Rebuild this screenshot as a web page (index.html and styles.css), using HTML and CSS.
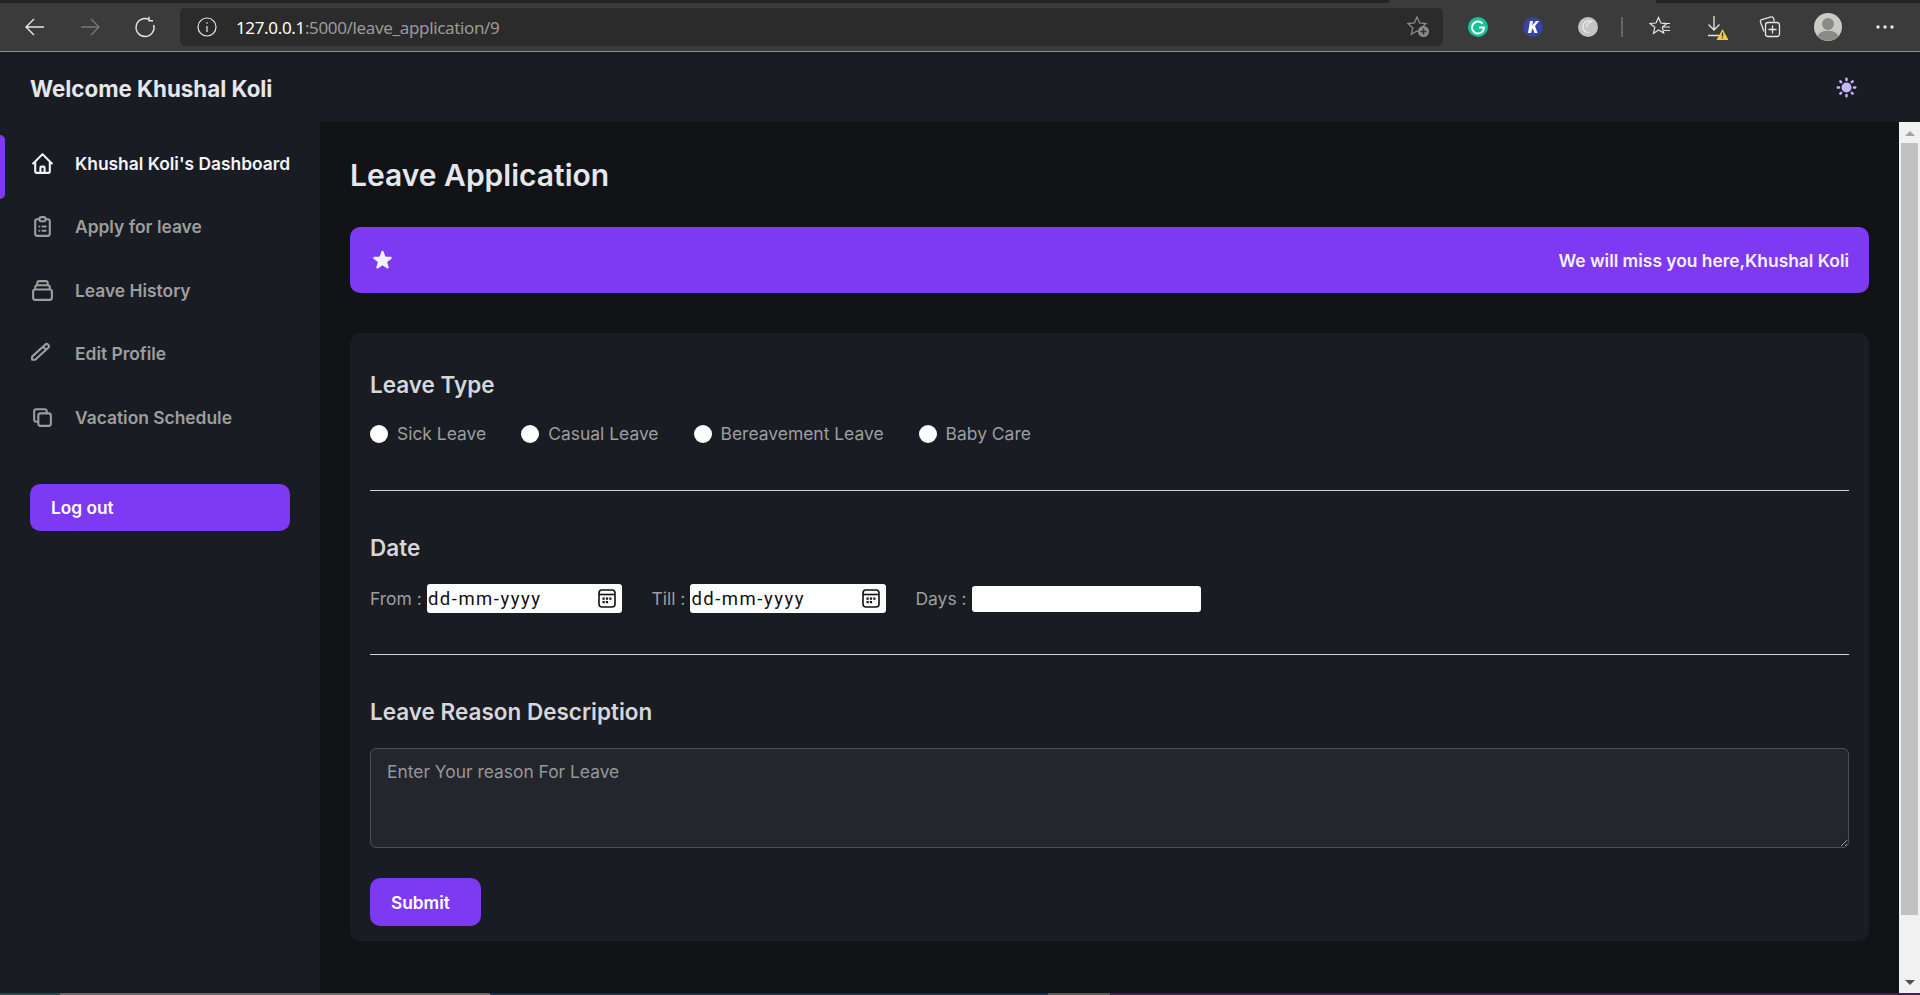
FILE: index.html
```html
<!DOCTYPE html>
<html lang="en">

<head>
  <meta charset="UTF-8">
  <meta name="viewport" content="width=device-width, initial-scale=1.0">
  <title>Leave Application</title>
  <link rel="stylesheet" href="styles.css">
</head>

<body>
  <!-- browser frame -->
  <div class="tab-strip">
    <div class="tab-dark tab-left"></div>
    <div class="tab-active"></div>
    <div class="tab-dark tab-right"></div>
  </div>
  <div class="toolbar">
    <span class="tool">
      <svg width="22" height="22" viewBox="0 0 22 22" fill="none" stroke="#e6e6e6" stroke-width="1.4"><path d="M20 11H2M10 3l-8 8 8 8"/></svg>
    </span>
    <span class="tool">
      <svg width="22" height="22" viewBox="0 0 22 22" fill="none" stroke="#777" stroke-width="1.4"><path d="M2 11h18M12 3l8 8-8 8"/></svg>
    </span>
    <span class="tool">
      <svg width="22" height="22" viewBox="0 0 22 22" fill="none" stroke="#e6e6e6" stroke-width="1.4"><path d="M14.5 3.2A9 9 0 1 0 19.7 9M15 .8v4h4"/></svg>
    </span>
    <div class="address">
      <svg width="20" height="20" viewBox="0 0 20 20" fill="none" stroke="#e6e6e6" stroke-width="1.2"><circle cx="10" cy="10" r="9"/><path d="M10 9v6M10 5.2v1.6"/></svg>
      <span class="url"><span class="url-host">127.0.0.1</span>:5000/leave_application/9</span>
      <svg width="24" height="24" viewBox="0 0 24 24"><path d="M10 2l2.6 6 6.4.6-4.8 4.3 1.4 6.3L10 16l-5.6 3.200 1.400-6.300L1 8.600 7.400 8z" fill="none" stroke="#8a8a8a" stroke-width="1.300"/><circle cx="16.500" cy="16.500" r="5.500" fill="#8a8a8a"/><path d="M16.500 13.500v6M13.500 16.500h6" stroke="#333" stroke-width="1.500"/></svg>
    </div>
    <span class="tool">
      <svg width="22" height="22" viewBox="0 0 22 22"><circle cx="11" cy="11" r="10" fill="#15c39a"/><path d="M15.500 7.500A6 6 0 1 0 17 11.500h-5" fill="none" stroke="#fff" stroke-width="2"/></svg>
    </span>
    <span class="tool">
      <svg width="22" height="22" viewBox="0 0 22 22"><circle cx="11" cy="11" r="10" fill="#3644a8"/><path d="M8 5h3L10.200 9.500 14 5h3.200l-4.200 5 2.500 7h-3.200l-1.500-4.500-1 1.200L9.200 17H6z" fill="#fff"/></svg>
    </span>
    <span class="tool">
      <svg width="22" height="22" viewBox="0 0 22 22"><circle cx="11" cy="11" r="10" fill="#c4c4c4"/><path d="M15.500 6A6 6 0 0 0 6 11c0 4 3 6 6 5M15.500 6c-3-1-6 2-5.500 5" fill="none" stroke="#f0f0f0" stroke-width="1.100"/></svg>
    </span>
    <span class="tool-sep"></span>
    <span class="tool">
      <svg width="22" height="22" viewBox="0 0 22 22" fill="none" stroke="#e6e6e6" stroke-width="1.200"><path d="M9.500 1.500l2.300 5.500 6 .5-4.500 3.800 1.400 5.700-5.200-3-5 3.500 1.300-6.200L1 7.500l6-.5zM14 11h7M15 14.500h6M13 7.500h8"/></svg>
    </span>
    <span class="tool">
      <svg width="26" height="26" viewBox="0 0 26 26"><path d="M12 2v14M6.500 10.500l5.500 5.500 5.500-5.500M6 21.500h11" fill="none" stroke="#e6e6e6" stroke-width="1.300"/><path d="M20.500 15l6 11h-12z" fill="#f5c842"/><path d="M20.500 18.500v4M20.500 23.500v1" stroke="#333" stroke-width="1.300"/></svg>
    </span>
    <span class="tool tool-collections">
      <svg width="22" height="22" viewBox="0 0 22 22" fill="none" stroke="#e6e6e6" stroke-width="1.300"><path d="M5 15.500L1.500 6a2 2 0 0 1 1.300-2.500L12 1a2 2 0 0 1 2.500 1.300l.8 3"/><rect x="6.500" y="6.500" width="14" height="14" rx="2.500"/><path d="M13.500 9.500v8M9.500 13.500h8"/></svg>
    </span>
    <span class="tool tool-avatar">
      <svg width="28" height="28" viewBox="0 0 28 28"><circle cx="14" cy="14" r="14" fill="#cbcbc6"/><circle cx="14" cy="11" r="6" fill="#8a8a86"/><path d="M3.500 23a11 7.500 0 0 1 21 0 14 14 0 0 1-21 0z" fill="#8a8a86"/></svg>
    </span>
    <span class="tool">
      <svg width="18" height="4" viewBox="0 0 18 4" fill="#e6e6e6"><circle cx="2" cy="2" r="1.700"/><circle cx="9" cy="2" r="1.700"/><circle cx="16" cy="2" r="1.700"/></svg>
    </span>
  </div>

  <header class="topbar">
    <span class="welcome">Welcome Khushal Koli</span>
    <svg class="theme-icon" width="25" height="25" viewBox="0 0 20 20" fill="currentColor"><path d="M10 2a1 1 0 011 1v1a1 1 0 11-2 0V3a1 1 0 011-1zm4 8a4 4 0 11-8 0 4 4 0 018 0zm-.464 4.950l.707.707a1 1 0 001.414-1.414l-.707-.707a1 1 0 00-1.414 1.414zm2.120-10.607a1 1 0 010 1.414l-.706.707a1 1 0 11-1.414-1.414l.707-.707a1 1 0 011.414 0zM17 11a1 1 0 100-2h-1a1 1 0 100 2h1zm-7 4a1 1 0 011 1v1a1 1 0 11-2 0v-1a1 1 0 011-1zM5.050 6.464A1 1 0 106.465 5.050l-.708-.707a1 1 0 00-1.414 1.414l.707.707zm1.414 8.486l-.707.707a1 1 0 01-1.414-1.414l.707-.707a1 1 0 011.414 1.414zM4 11a1 1 0 100-2H3a1 1 0 000 2h1z"/></svg>
  </header>

  <div class="layout">
    <aside class="sidebar">
      <nav class="side-nav">
        <a class="side-link active" href="#">
          <svg class="side-icon" viewBox="0 0 24 24"><path d="M3 12l2-2m0 0l7-7 7 7M5 10v10a1 1 0 001 1h3m10-11l2 2m-2-2v10a1 1 0 01-1 1h-3m-6 0a1 1 0 001-1v-4a1 1 0 011-1h2a1 1 0 011 1v4a1 1 0 001 1m-6 0h6"/></svg>
          Khushal Koli's Dashboard
        </a>
        <a class="side-link" href="#">
          <svg class="side-icon" viewBox="0 0 24 24"><path d="M9 5H7a2 2 0 00-2 2v12a2 2 0 002 2h10a2 2 0 002-2V7a2 2 0 00-2-2h-2M9 5a2 2 0 002 2h2a2 2 0 002-2M9 5a2 2 0 012-2h2a2 2 0 012 2m-3 7h3m-3 4h3m-6-4h.01M9 16h.01"/></svg>
          Apply for leave
        </a>
        <a class="side-link" href="#">
          <svg class="side-icon" viewBox="0 0 24 24"><path d="M19 11H5m14 0a2 2 0 012 2v6a2 2 0 01-2 2H5a2 2 0 01-2-2v-6a2 2 0 012-2m14 0V9a2 2 0 00-2-2M5 11V9a2 2 0 012-2m0 0V5a2 2 0 012-2h6a2 2 0 012 2v2M7 7h10"/></svg>
          Leave History
        </a>
        <a class="side-link" href="#">
          <svg class="side-icon" viewBox="0 0 24 24"><path d="M2 18h3L17.500 6.500a2 2 0 0 0-3-3L2 15zM12.500 5.500l3 3"/></svg>
          Edit Profile
        </a>
        <a class="side-link" href="#">
          <svg class="side-icon" viewBox="0 0 24 24"><path d="M8 16H6a2 2 0 01-2-2V6a2 2 0 012-2h8a2 2 0 012 2v2m-6 12h8a2 2 0 002-2v-8a2 2 0 00-2-2h-8a2 2 0 00-2 2v8a2 2 0 002 2z"/></svg>
          Vacation Schedule
        </a>
      </nav>
      <button class="btn logout">Log out</button>
    </aside>

    <main class="content">
      <h1 class="page-title">Leave Application</h1>

      <div class="banner">
        <svg width="25" height="25" viewBox="0 0 20 20" fill="currentColor"><path d="M9.049 2.927c.3-.921 1.603-.921 1.902 0l1.070 3.292a1 1 0 00.950.690h3.462c.969 0 1.371 1.240.588 1.810l-2.800 2.034a1 1 0 00-.364 1.118l1.070 3.292c.3.921-.755 1.688-1.540 1.118l-2.800-2.034a1 1 0 00-1.175 0l-2.800 2.034c-.784.570-1.838-.197-1.539-1.118l1.070-3.292a1 1 0 00-.364-1.118L2.980 8.720c-.783-.570-.380-1.810.588-1.810h3.461a1 1 0 00.951-.690l1.070-3.292z"/></svg>
        <span>We will miss you here,Khushal Koli</span>
      </div>

      <form class="card">
        <h2 class="section-title">Leave Type</h2>
        <div class="radio-row">
          <label class="radio"><input type="radio" name="type">Sick Leave</label>
          <label class="radio"><input type="radio" name="type">Casual Leave</label>
          <label class="radio"><input type="radio" name="type">Bereavement Leave</label>
          <label class="radio"><input type="radio" name="type">Baby Care</label>
        </div>
        <hr class="divider">

        <h2 class="section-title">Date</h2>
        <div class="date-row">
          <span>From :</span>
          <div class="date-box date-from">
            dd-mm-yyyy
            <svg width="18" height="19" viewBox="0 0 18 19"><rect x="1" y="1" width="16" height="17" rx="3" fill="none" stroke="#111" stroke-width="1.600"/><path d="M1 5.500h16" stroke="#111" stroke-width="1.600"/><path d="M4.500 8.500h2.200v2.200H4.500zM7.900 8.500h2.200v2.200H7.900zM11.300 8.500h2.200v2.200h-2.200zM4.500 12h2.200v2.200H4.500zM7.900 12h2.200v2.200H7.900z" fill="#111"/></svg>
          </div>
          <span class="date-label">Till :</span>
          <div class="date-box date-till">
            dd-mm-yyyy
            <svg width="18" height="19" viewBox="0 0 18 19"><rect x="1" y="1" width="16" height="17" rx="3" fill="none" stroke="#111" stroke-width="1.600"/><path d="M1 5.500h16" stroke="#111" stroke-width="1.600"/><path d="M4.500 8.500h2.200v2.200H4.500zM7.900 8.500h2.200v2.200H7.900zM11.300 8.500h2.200v2.200h-2.200zM4.500 12h2.200v2.200H4.500zM7.900 12h2.200v2.200H7.900z" fill="#111"/></svg>
          </div>
          <span class="date-label days-label">Days :</span>
          <input class="days-input" type="text">
        </div>
        <hr class="divider">

        <h2 class="section-title">Leave Reason Description</h2>
        <textarea class="reason" placeholder="Enter Your reason For Leave"></textarea>
        <button class="btn submit" type="button">Submit</button>
      </form>
    </main>

    <div class="scrollbar">
      <span class="arrow-up"></span>
      <div class="thumb"></div>
      <span class="arrow-down"></span>
    </div>
  </div>

  <div class="taskbar">
    <i class="seg-teal"></i>
    <i class="seg-grey"></i>
    <i class="seg-blue"></i>
    <i class="seg-light"></i>
    <i class="seg-purple"></i>
  </div>
</body>

</html>
```

FILE: styles.css
```css
* {
  margin: 0;
  padding: 0;
  box-sizing: border-box;
}

body {
  display: flex;
  flex-direction: column;
  height: 995px;
  overflow: hidden;
  background: #121317;
  color: #9e9e9e;
  font-family: Inter, "Noto Sans", sans-serif;
}

/* browser frame */
.tab-strip {
  display: flex;
  height: 3px;
  background: #3b3b3b;
}

.tab-dark {
  background: #242424;
}

.tab-left {
  width: 1389px;
}

.tab-active {
  flex: 1;
}

.tab-right {
  width: 264px;
}

.toolbar {
  display: flex;
  align-items: center;
  height: 49px;
  padding: 0 8px 0 7px;
  background: #3b3b3b;
  border-bottom: 1px solid #8d8d8d;
}

.tool {
  display: flex;
  align-items: center;
  justify-content: center;
  width: 55px;
  flex: none;
}

.tool-collections {
  margin-right: 3px;
}

.tool-avatar {
  margin-right: 2px;
}

.tool-sep {
  width: 2px;
  height: 20px;
  margin: 0 9.500px 0 5px;
  background: #666;
  flex: none;
}

.address {
  display: flex;
  align-items: center;
  flex: 1;
  height: 38px;
  margin: 0 7.500px 0 8px;
  padding: 0 12px 0 17px;
  background: #2b2b2b;
  border-radius: 5px;
}

.url {
  flex: 1;
  margin-left: 19px;
  font-family: "Noto Sans", sans-serif;
  font-size: 17px;
  letter-spacing: -.35px;
  color: #9a9a9a;
}

.url-host {
  color: #fff;
}

/* app header */
.topbar {
  display: flex;
  align-items: center;
  justify-content: space-between;
  flex: none;
  height: 70px;
  padding: 0 61px 0 30px;
  background: #1a1c23;
}

.welcome {
  margin-top: 2px;
  font-size: 22.300px;
  font-weight: 700;
  color: #e5e7eb;
}

.theme-icon {
  color: #c4b5fd;
}

.layout {
  display: flex;
  flex: 1;
  min-height: 0;
}

/* sidebar */
.sidebar {
  width: 320px;
  flex: none;
  padding-top: 13px;
  background: #1a1c23;
}

.side-nav {
  display: flex;
  flex-direction: column;
}

.side-link {
  display: flex;
  align-items: center;
  gap: 20px;
  height: 63.500px;
  padding: 0 0 7px 30px;
  font-size: 17.400px;
  font-weight: 600;
  color: #9e9e9e;
  text-decoration: none;
}

.side-link.active {
  position: relative;
  color: #f3f4f6;
}

.side-link.active::before {
  content: "";
  position: absolute;
  left: 0;
  top: 0;
  bottom: 0;
  width: 5px;
  background: #7e3af2;
  border-radius: 0 6px 6px 0;
}

.side-icon {
  width: 25px;
  height: 25px;
  fill: none;
  stroke: currentColor;
  stroke-width: 2;
  stroke-linecap: round;
  stroke-linejoin: round;
  flex: none;
}

.btn {
  display: block;
  border: none;
  border-radius: 10px;
  background: #7e3af2;
  color: #fff;
  font-family: inherit;
  font-size: 17.300px;
  font-weight: 600;
  text-align: left;
}

.logout {
  width: 260px;
  height: 47px;
  margin: 31px 0 0 30px;
  padding-left: 21px;
}

/* main */
.content {
  flex: 1;
  padding: 31px 30px 0;
}

.page-title {
  font-size: 30px;
  font-weight: 600;
  line-height: 44px;
  color: #e5e7eb;
}

.banner {
  display: flex;
  align-items: center;
  justify-content: space-between;
  height: 66px;
  margin-top: 30px;
  padding: 0 20px;
  border-radius: 10px;
  background: #7e3af2;
  color: #f3f0ff;
  font-size: 17.400px;
  font-weight: 600;
}

.card {
  height: 608px;
  margin-top: 40px;
  padding: 36px 20px 0;
  background: #1a1c23;
  border-radius: 10px;
}

.section-title {
  font-size: 22.500px;
  font-weight: 600;
  line-height: 32px;
  color: #d6d7da;
}

.radio-row {
  display: flex;
  gap: 35px;
  margin-top: 17px;
  line-height: 32px;
  font-size: 17.450px;
}

.radio {
  display: flex;
  align-items: center;
  gap: 9px;
}

.radio input {
  appearance: none;
  width: 18px;
  height: 18px;
  background: #fff;
  border-radius: 50%;
}

.divider {
  height: 1px;
  margin: 40px 0 41px;
  border: none;
  background: #d4d4d4;
}

.date-row {
  display: flex;
  align-items: center;
  height: 29px;
  margin: 20px 0 41px;
  font-size: 17.500px;
}

.date-row + .divider {
  margin-top: 0;
}

.date-box {
  display: flex;
  align-items: center;
  justify-content: space-between;
  height: 29px;
  margin-left: 5px;
  padding: 0 6px 0 1px;
  background: #fff;
  border-radius: 3px;
  color: #111;
  font-family: Roboto, sans-serif;
  font-size: 18.500px;
  letter-spacing: 1.500px;
}

.date-from {
  width: 195px;
}

.date-till {
  width: 196px;
}

.date-label {
  margin-left: 29.500px;
}

.days-label {
  margin-left: 29px;
}

.days-input {
  width: 229px;
  height: 26px;
  margin-left: 5px;
  border: none;
  border-radius: 3px;
  background: #fff;
}

.reason {
  display: block;
  width: 100%;
  height: 100px;
  margin-top: 20px;
  padding: 12px 16px;
  background: #24262d;
  border: 1px solid #4c4f52;
  border-radius: 6px;
  outline: none;
  color: #9e9e9e;
  font-family: inherit;
  font-size: 17.400px;
  line-height: 22px;
}

.reason::placeholder {
  color: #959799;
}

.submit {
  width: 111px;
  height: 48px;
  margin-top: 30px;
  padding-left: 21px;
}

/* page scrollbar */
.scrollbar {
  display: flex;
  flex-direction: column;
  align-items: center;
  width: 21px;
  flex: none;
  background: #f1f1f1;
}

.arrow-up,
.arrow-down {
  width: 0;
  height: 0;
  border-left: 5px solid transparent;
  border-right: 5px solid transparent;
  flex: none;
}

.arrow-up {
  margin: 9px 0 7px;
  border-bottom: 5px solid #a3a3a3;
}

.arrow-down {
  margin: auto 0 8px;
  border-top: 5px solid #505050;
}

.thumb {
  width: 17px;
  height: 772px;
  background: #c1c1c1;
}

.taskbar {
  display: flex;
  flex: none;
  height: 2px;
}

.taskbar i {
  display: block;
}

.seg-teal {
  width: 60px;
  background: #2b4a4c;
}

.seg-grey {
  width: 430px;
  background: #6a6a6a;
}

.seg-blue {
  width: 558px;
  background: #1f2f44;
}

.seg-light {
  width: 62px;
  background: #5a5a5a;
}

.seg-purple {
  flex: 1;
  background: #3c2350;
}
```
